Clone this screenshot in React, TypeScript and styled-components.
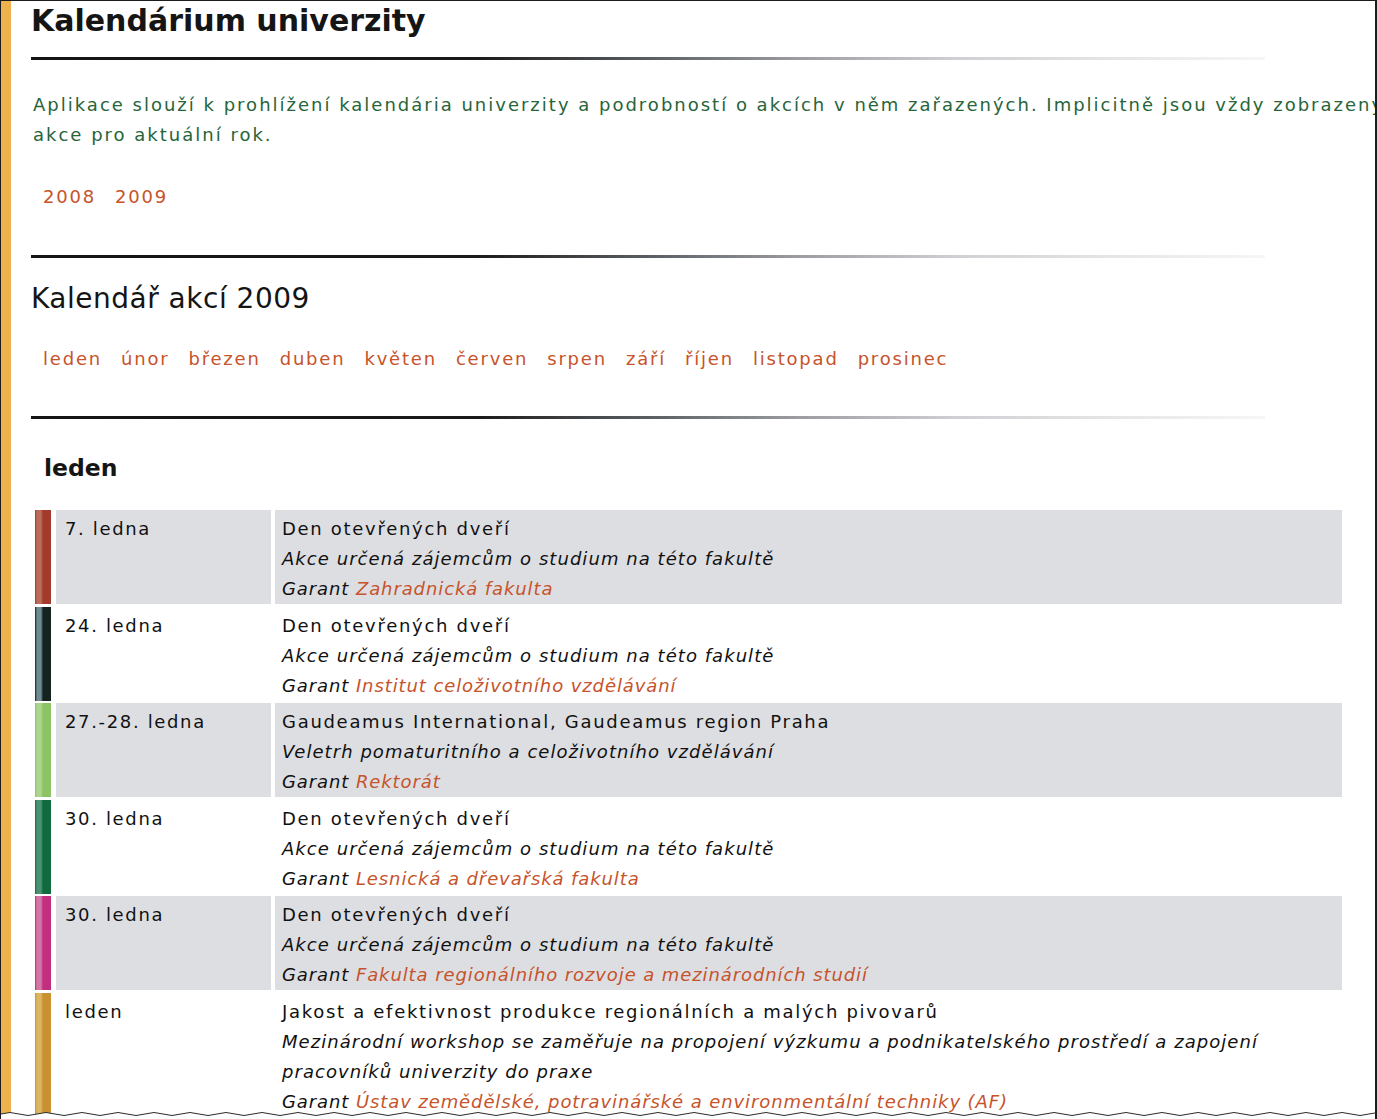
import React from "react";
import styled, { createGlobalStyle } from "styled-components";

const GlobalStyle = createGlobalStyle`
  html, body { margin: 0; padding: 0; background: #ffffff; }
  body { font-family: "DejaVu Sans", Verdana, sans-serif; color: #111; }
`;

const Frame = styled.div`
  position: relative;
  box-sizing: border-box;
  width: 1377px;
  height: 1119px;
  overflow: hidden;
  border-top: 1px solid #1c1c1c;
  border-left: 1px solid #1c1c1c;
  border-right: 2px solid #1c1c1c;
  background: #fff;
`;

const Page = styled.div`
  box-sizing: border-box;
  height: 100%;
  border-left: 10px solid #efb04e;
  padding-left: 20px;
  display: flex;
  flex-direction: column;
  align-items: flex-start;
`;

const Title = styled.h1`
  margin: 2px 0 0;
  font-size: 30px;
  line-height: 36px;
  font-weight: bold;
  color: #151515;
  white-space: nowrap;
`;

const Rule = styled.div<{ $top: number }>`
  margin-top: ${(p) => p.$top}px;
  width: 1234px;
  height: 3px;
  flex-shrink: 0;
  background: linear-gradient(
    to right,
    #141414 0%,
    #1a1a1a 36%,
    #5a5e62 50%,
    #9a9ca0 62%,
    #cfd0d3 75%,
    #e6e6e8 88%,
    #f6f6f6 100%
  );
`;

const Intro = styled.p`
  margin: 30px 0 0 2px;
  font-size: 18px;
  line-height: 30px;
  letter-spacing: 2px;
  color: #27653a;
  white-space: nowrap;
`;

const LinkList = styled.nav<{ $top: number }>`
  margin-top: ${(p) => p.$top}px;
  padding-left: 12px;
  display: flex;
  gap: 19px;
  font-size: 18px;
  line-height: 30px;
  letter-spacing: 1.8px;
  white-space: nowrap;
`;

const NavLink = styled.a`
  color: #c6532b;
  text-decoration: none;
`;

const SubTitle = styled.h2`
  margin: 24px 0 0;
  font-size: 28px;
  line-height: 34px;
  font-weight: normal;
  letter-spacing: 0.5px;
  color: #151515;
  white-space: nowrap;
`;

const MonthTitle = styled.h3`
  margin: 35px 0 0 13px;
  font-size: 23.5px;
  line-height: 28px;
  font-weight: bold;
  color: #151515;
`;

const Table = styled.div`
  margin: 28px 0 0 4px;
  width: 1307px;
  display: flex;
  flex-direction: column;
  gap: 2.6px;
`;

const Row = styled.div`
  display: grid;
  grid-template-columns: 16px 220px 1fr;
  font-size: 18px;
  line-height: 30px;
`;

const Strip = styled.div<{ $c: string; $l: string }>`
  background: linear-gradient(
    to right,
    ${(p) => p.$c} 0px,
    ${(p) => p.$l} 2px,
    ${(p) => p.$l} 6px,
    ${(p) => p.$c} 8px,
    ${(p) => p.$c} 16px
  );
`;

const DateCell = styled.div<{ $alt: boolean }>`
  margin-left: 5px;
  padding: 4px 0 0 9px;
  background: ${(p) => (p.$alt ? "#dddee2" : "transparent")};
  letter-spacing: 1.65px;
  white-space: nowrap;
`;

const DescCell = styled.div<{ $alt: boolean }>`
  margin-left: 4px;
  padding: 4px 50px 0 7px;
  background: ${(p) => (p.$alt ? "#dddee2" : "transparent")};
`;

const EventName = styled.div`
  letter-spacing: 1.7px;
`;

const EventNote = styled.div`
  font-style: italic;
  letter-spacing: 1.05px;
`;

const Garant = styled.div`
  font-style: italic;
  letter-spacing: 0.9px;
`;

const GarantLink = styled.a`
  color: #c6532b;
  text-decoration: none;
`;

const TornEdge = styled.svg`
  position: absolute;
  left: 0;
  bottom: 0;
  width: 1377px;
  height: 8px;
`;

type Ev = {
  date: string;
  name: string;
  note: string;
  garant: string;
  c: string;
  l: string;
};

const events: Ev[] = [
  {
    date: "7. ledna",
    name: "Den otevřených dveří",
    note: "Akce určená zájemcům o studium na této fakultě",
    garant: "Zahradnická fakulta",
    c: "#a23b2b",
    l: "#bb6c5a",
  },
  {
    date: "24. ledna",
    name: "Den otevřených dveří",
    note: "Akce určená zájemcům o studium na této fakultě",
    garant: "Institut celoživotního vzdělávání",
    c: "#16221f",
    l: "#6e8a92",
  },
  {
    date: "27.-28. ledna",
    name: "Gaudeamus International, Gaudeamus region Praha",
    note: "Veletrh pomaturitního a celoživotního vzdělávání",
    garant: "Rektorát",
    c: "#8cc363",
    l: "#add58e",
  },
  {
    date: "30. ledna",
    name: "Den otevřených dveří",
    note: "Akce určená zájemcům o studium na této fakultě",
    garant: "Lesnická a dřevařská fakulta",
    c: "#0f6b3d",
    l: "#4a9272",
  },
  {
    date: "30. ledna",
    name: "Den otevřených dveří",
    note: "Akce určená zájemcům o studium na této fakultě",
    garant: "Fakulta regionálního rozvoje a mezinárodních studií",
    c: "#c22f7f",
    l: "#d476a6",
  },
  {
    date: "leden",
    name: "Jakost a efektivnost produkce regionálních a malých pivovarů",
    note:
      "Mezinárodní workshop se zaměřuje na propojení výzkumu a podnikatelského prostředí a zapojení pracovníků univerzity do praxe",
    garant: "Ústav zemědělské, potravinářské a environmentální techniky (AF)",
    c: "#c99131",
    l: "#dcb562",
  },
];

const years = ["2008", "2009"];
const months = [
  "leden",
  "únor",
  "březen",
  "duben",
  "květen",
  "červen",
  "srpen",
  "září",
  "říjen",
  "listopad",
  "prosinec",
];

function wavePath(): string {
  let d = "M0 3";
  for (let x = 0; x < 1400; x += 36) {
    d += ` Q${x + 9} 0 ${x + 18} 3 Q${x + 27} 6 ${x + 36} 3`;
  }
  return d;
}

export default function App() {
  const wave = wavePath();
  return (
    <>
      <GlobalStyle />
      <Frame>
        <Page>
          <Title>Kalendárium univerzity</Title>
          <Rule $top={18} />
          <Intro>
            Aplikace slouží k prohlížení kalendária univerzity a podrobností o
            akcích v něm zařazených. Implicitně jsou vždy zobrazeny
            <br />
            akce pro aktuální rok.
          </Intro>
          <LinkList $top={32}>
            {years.map((y) => (
              <NavLink key={y} href="#">
                {y}
              </NavLink>
            ))}
          </LinkList>
          <Rule $top={43} />
          <SubTitle>Kalendář akcí 2009</SubTitle>
          <LinkList $top={28}>
            {months.map((m) => (
              <NavLink key={m} href="#">
                {m}
              </NavLink>
            ))}
          </LinkList>
          <Rule $top={42} />
          <MonthTitle>leden</MonthTitle>
          <Table>
            {events.map((e, i) => {
              const alt = i % 2 === 0;
              return (
                <Row key={i}>
                  <Strip $c={e.c} $l={e.l} />
                  <DateCell $alt={alt}>{e.date}</DateCell>
                  <DescCell $alt={alt}>
                    <EventName>{e.name}</EventName>
                    <EventNote>{e.note}</EventNote>
                    <Garant>
                      Garant <GarantLink href="#">{e.garant}</GarantLink>
                    </Garant>
                  </DescCell>
                </Row>
              );
            })}
          </Table>
        </Page>
        <TornEdge viewBox="0 0 1377 8" preserveAspectRatio="none">
          <path d={`${wave} L1400 8 L0 8 Z`} fill="#ffffff" />
          <path d={wave} fill="none" stroke="#2a2a2a" strokeWidth="1" />
        </TornEdge>
      </Frame>
    </>
  );
}
